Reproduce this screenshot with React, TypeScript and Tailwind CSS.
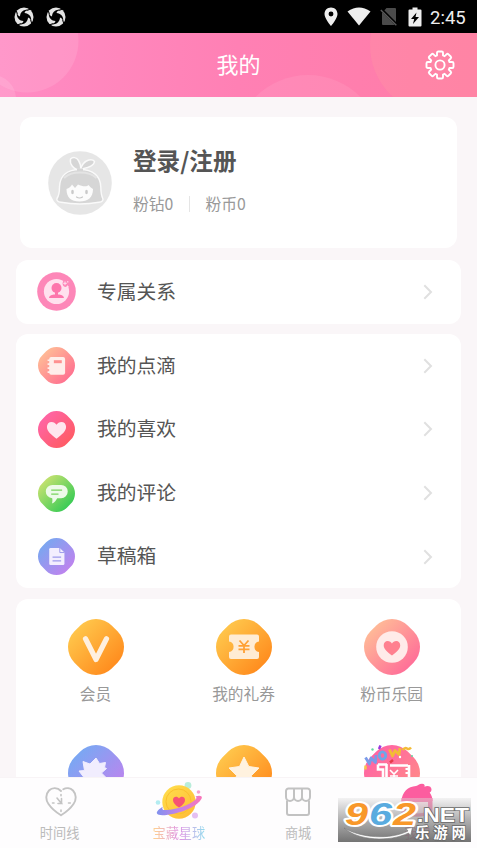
import React from 'react';

interface BlobProps {
  id: string;
  from: string;
  to: string;
  size?: 'sm' | 'lg';
  children?: React.ReactNode;
}

// Rounded diamond badge, everything inside is drawn on a 56x56 grid
function Blob({ id, from, to, size = 'lg', children }: BlobProps) {
  return (
    <svg viewBox="0 0 56 56" className={size === 'lg' ? 'w-14 h-14 shrink-0' : 'w-[37px] h-[37px] shrink-0'}>
      <defs>
        <linearGradient id={id} x1="0.15" y1="0.15" x2="0.85" y2="0.85">
          <stop offset="0" stopColor={from} />
          <stop offset="1" stopColor={to} />
        </linearGradient>
        <clipPath id={`${id}-clip`}>
          <rect x="1.700" y="1.700" width="52.600" height="52.600" rx="22.200" transform="rotate(45 28 28)" />
        </clipPath>
      </defs>
      <rect width="56" height="56" fill={`url(#${id})`} clipPath={`url(#${id}-clip)`} />
      {children}
    </svg>
  );
}

function RelationIcon() {
  return (
    <svg viewBox="0 0 39 39" className="w-[39px] h-[39px] -ml-px -mr-px shrink-0">
      <circle cx="19.5" cy="19.5" r="19.3" fill="#fd87b8" />
      <circle cx="19.5" cy="19.5" r="12.6" fill="#ffe1ee" />
      <circle cx="19.5" cy="16" r="5" fill="#fd76ac" />
      <path d="M18 19h3v3.500c3 .2 5.500 .8 6 3.500H12c.5-2.700 3-3.300 6-3.500z" fill="#fd76ac" />
      <circle cx="29" cy="11.500" r="3.400" fill="#fd87b8" />
      <path d="M28 9.500v3.600M26.200 11.300h3.600M30.500 13.500v2M29.500 14.500h2M30.800 9v1.600" stroke="#ffe1ee" strokeWidth="1" />
    </svg>
  );
}

function Avatar() {
  return (
    <svg viewBox="0 0 64 64" className="w-16 h-16 shrink-0">
      <circle cx="32" cy="32" r="31.800" fill="#e6e6e6" />
      <g fill="#d6d6d6" stroke="#fafafa" strokeWidth="1.400" strokeLinejoin="round">
        <path d="M32 18.500C37 17 46 16 46.500 10.500c-1.500-2-5-2-8-.5s-5 5-6.500 9z" />
        <path d="M33 19.500C25 18.500 21.500 13 22.500 8c2.500-2.500 6-1.500 8 1.500s2.500 7 2.500 10z" />
        <path d="M32 18.500c13 0 20.500 6.500 20.800 17.500.1 5 .2 8 2 11.500.8 2-.8 3.300-3.800 3.800-12 2.200-26 2.200-38 0-3-.5-4.800-1.800-4-3.800 2-3 2.500-6 2.500-11.500C11.800 25 19 18.500 32 18.500z" />
      </g>
      <path d="M29 17.500h6v2.500h-6z" fill="#d6d6d6" />
      <path d="M16 27c4-4 9.500-5.500 16-5.500s12.500 1.500 16.500 5.500" fill="none" stroke="#e4e4e4" strokeWidth="2" />
      <path d="M18.500 38c2.500-1 4.500-2.500 5.500-4.500l3 3.500 3-3.500c4 2 9 2.500 10.500.5 1.500 2 3 3 4.500 4 0 8.500-5 12.500-13.500 12.500S18.500 46.500 18.500 38z" fill="#fcfcfc" />
      <ellipse cx="24.500" cy="41" rx="1.300" ry="2.300" fill="#cacaca" />
      <ellipse cx="38.500" cy="41" rx="1.300" ry="2.300" fill="#cacaca" />
      <path d="M28.500 46q3 2 6 0" fill="none" stroke="#c6c6c6" strokeWidth="1.200" strokeLinecap="round" />
    </svg>
  );
}

function Chevron() {
  return (
    <svg viewBox="0 0 10 16" className="w-[10px] h-4 shrink-0" fill="none" stroke="#e0e0e0" strokeWidth="2">
      <path d="M1.300 1.300 8 8l-6.700 6.700" />
    </svg>
  );
}

function Swirl() {
  return (
    <svg viewBox="0 0 20 20" className="w-5 h-5">
      <circle cx="10" cy="10" r="9.500" fill="#e4e4e4" />
      <path d="M10 5.800 14.200 10 10 14.200 5.800 10z" fill="#000" />
      {[0, 90, 180, 270].map((angle) => (
        <path key={angle} d="M6 10.500C5.800 7.500 7 5 9.500 3.600c1.600-.8 3-1 4-.5-1.700.3-2.700 1.400-3.200 4z" fill="#000" transform={`rotate(${angle} 10 10)`} />
      ))}
      {[0, 90, 180, 270].map((angle) => (
        <path key={angle} d="M12.500 3.400Q15 3 16.500 1.800" fill="none" stroke="#000" strokeWidth="1.100" transform={`rotate(${angle} 10 10)`} />
      ))}
    </svg>
  );
}

function StatusBar() {
  return (
    <div className="h-[33px] shrink-0 bg-black flex items-center justify-between pl-[14px] pr-[10px]">
      <div className="flex gap-3">
        <Swirl />
        <Swirl />
      </div>
      <div className="flex items-center">
        <svg viewBox="0 0 14 20" className="w-[14px] h-[20px]" fill="#eee">
          <path fillRule="evenodd" d="M7 .5C3.200.5.500 3.300.500 7 .5 11.500 7 19 7 19s6.500-7.500 6.500-12C13.500 3.300 10.800.5 7 .5zM7 4.500a2.400 2.400 0 1 1 0 4.900 2.400 2.400 0 0 1 0-4.900z" />
        </svg>
        <svg viewBox="0 0 24 19" className="w-6 h-[19px] ml-[9px]" fill="#eee">
          <path d="M.5 4.500Q12-3.500 23.500 4.500L12 18.500z" />
        </svg>
        <svg viewBox="0 0 18 19" className="w-[18px] h-[19px] ml-[9px]">
          <path d="M6.500 1H15a1 1 0 0 1 1 1v15a1 1 0 0 1-1 1H3a1 1 0 0 1-1-1V6z" fill="#4b4b4b" />
          <path d="M1 2l16 16" stroke="#000" strokeWidth="3" />
          <path d="M.8 3l15.500 15.300" stroke="#5a5a5a" strokeWidth="1.400" />
        </svg>
        <svg viewBox="0 0 14 20" className="w-[14px] h-5 ml-[10px]">
          <path d="M1.500 2.500H4.500V.5h5v2h3a1 1 0 0 1 1 1V18.500a1 1 0 0 1-1 1h-11a1 1 0 0 1-1-1V3.500a1 1 0 0 1 1-1z" fill="#eee" />
          <path d="M8.500 5.500 3 12h3.200l-1.200 5 6-7H7.500z" fill="#000" />
        </svg>
        <span className="ml-2 w-[37px] font-['Roboto',sans-serif] text-[18.500px] leading-5 text-[#eee] mt-0.5 whitespace-nowrap">2:45</span>
      </div>
    </div>
  );
}

function Header() {
  return (
    <header className="relative h-16 shrink-0 overflow-hidden bg-linear-to-r from-[#ff8cc4] via-[#ff80b4] to-[#ff7ca6] flex items-center justify-center">
      <svg viewBox="0 0 477 64" className="absolute inset-0 w-full h-full">
        <circle cx="27" cy="8" r="51.500" fill="#fff" fillOpacity="0.11" />
        <circle cx="-8" cy="66" r="24" fill="#fff" fillOpacity="0.12" />
        <circle cx="308" cy="116" r="74" fill="#fff" fillOpacity="0.08" />
        <circle cx="440" cy="12" r="70" fill="#ff96a2" fillOpacity="0.35" />
      </svg>
      <h1 className="relative text-[22px] leading-8 text-white -mt-1">我的</h1>
      <svg viewBox="0 0 30 30" className="absolute right-[22px] top-[17px] w-[30px] h-[30px]" fill="none" stroke="#fff" strokeWidth="1.900" strokeLinejoin="round">
        <path d="M12 5.500V2.800Q12 1.500 13.300 1.500h3.400Q18 1.500 18 2.800v2.700l1.600.7 1.900-1.900q1-1 2 0l2.200 2.200q1 1 0 2l-1.900 1.900.7 1.600h2.700q1.300 0 1.300 1.300v3.400q0 1.300-1.300 1.300h-2.700l-.7 1.600 1.900 1.900q1 1 0 2l-2.200 2.200q-1 1-2 0l-1.900-1.900-1.600.7v2.700q0 1.300-1.300 1.300h-3.400q-1.300 0-1.300-1.300v-2.700l-1.600-.7-1.900 1.900q-1 1-2 0l-2.200-2.200q-1-1 0-2l1.900-1.900-.7-1.600H2.800q-1.300 0-1.300-1.300v-3.400Q1.500 12 2.800 12h2.700l.7-1.600-1.900-1.900q-1-1 0-2l2.200-2.200q1-1 2 0l1.900 1.900z" />
        <circle cx="15" cy="15" r="4.600" />
      </svg>
    </header>
  );
}

interface RowProps {
  icon: React.ReactNode;
  label: string;
}

function Row({ icon, label }: RowProps) {
  return (
    <div className="h-[63.600px] flex items-center pl-[21.500px] pr-7">
      {icon}
      <span className="ml-[22.500px] flex-1 text-[19.800px] leading-7 text-[#555] -mt-[2.500px]">{label}</span>
      <Chevron />
    </div>
  );
}

const HEART = 'M28 42C20 36 13.500 31 13.500 24c0-4.500 3-7.500 7-7.500 3.200 0 6 1.800 7.500 4.300 1.500-2.500 4.300-4.300 7.500-4.300 4 0 7 3 7 7.500C42.500 31 36 36 28 42z';

const rows: RowProps[] = [
  {
    label: '我的点滴',
    icon: (
      <Blob id="note" from="#ffbb96" to="#ff7190" size="sm">
        <path d="M20 15h18a3 3 0 0 1 3 3v21a3 3 0 0 1-3 3H20a3 3 0 0 1-3-3V18a3 3 0 0 1 3-3z" fill="#ffeeea" />
        <path d="M14.500 20h5M14.500 26h5M14.500 32h5M14.500 38h5" stroke="#ffeeea" strokeWidth="2.500" />
        <rect x="24" y="20" width="12" height="4.500" fill="#ff9190" />
      </Blob>
    ),
  },
  {
    label: '我的喜欢',
    icon: (
      <Blob id="like" from="#ff65a5" to="#ff5b64" size="sm">
        <path d={HEART} fill="#ffe6ee" />
      </Blob>
    ),
  },
  {
    label: '我的评论',
    icon: (
      <Blob id="comment" from="#c4e170" to="#38cb55" size="sm">
        <path d="M22 15h13a9 9 0 0 1 0 20h-6c-2 4-4 6.500-8 8 1-3 1-5 .5-8A10 10 0 0 1 22 15z" fill="#edfae9" />
        <path d="M20 23h16.500M20 29h11" stroke="#78d35c" strokeWidth="2" />
      </Blob>
    ),
  },
  {
    label: '草稿箱',
    icon: (
      <Blob id="draft" from="#7aa7f0" to="#be83ee" size="sm">
        <path d="M19 15h14l7 7v17a2 2 0 0 1-2 2H19a2 2 0 0 1-2-2V17a2 2 0 0 1 2-2z" fill="#f3eefe" />
        <path d="M33 15v7h7" fill="none" stroke="#9e9bec" strokeWidth="1.500" />
        <path d="M22 29h13M22 34.500h13" stroke="#9e9bec" strokeWidth="2" />
      </Blob>
    ),
  },
];

const tiles: { id: string; label?: string; icon: React.ReactNode }[] = [
  {
    id: 'vip',
    label: '会员',
    icon: (
      <Blob id="vip" from="#ffc64b" to="#ff8c1e">
        <path d="M17.500 19.800 28 40.500 38.500 19.800" fill="none" stroke="#fff0df" strokeWidth="5.200" strokeLinecap="round" strokeLinejoin="round" />
      </Blob>
    ),
  },
  {
    id: 'coupon',
    label: '我的礼券',
    icon: (
      <Blob id="coupon" from="#ffc64b" to="#ff8c1e">
        <path d="M15 15.500h26a2 2 0 0 1 2 2v5a5.300 5.300 0 0 0 0 10.500v5a2 2 0 0 1-2 2H15a2 2 0 0 1-2-2v-5a5.300 5.300 0 0 0 0-10.500v-5a2 2 0 0 1 2-2z" fill="#ffecd4" />
        <path d="M23.500 21.500l4.500 5 4.500-5M22.500 26.800h11M22.500 30.300h11M28 26.500V34" fill="none" stroke="#ffa034" strokeWidth="1.800" />
      </Blob>
    ),
  },
  {
    id: 'park',
    label: '粉币乐园',
    icon: (
      <Blob id="park" from="#ffba97" to="#ff6e98">
        <circle cx="28" cy="28" r="15.800" fill="#ffebe9" />
        <path d={HEART} fill="#ff808f" transform="translate(12 12.600) scale(0.57)" />
      </Blob>
    ),
  },
  {
    id: 'level',
    icon: (
      <Blob id="level" from="#79a8f3" to="#be83ee">
        <path d="M28 13l3.500 5.500 6-1-1 5 2 1-5 4.500 4 4-3 10H18l-7-4 5-5.500-5-6.500 5.500-.5-1.500-9 7 2.500z" fill="#f1edfe" stroke="#f1edfe" strokeLinejoin="round" />
      </Blob>
    ),
  },
  {
    id: 'star',
    icon: (
      <Blob id="star" from="#ffc64b" to="#ff8c1e">
        <path d="m28 12 4.800 9.500L43 23l-7.500 7.500 2 11L28 36l-9.500 5.500 2-11L13 23l10.500-1.500z" fill="#fff2df" stroke="#fff2df" strokeLinejoin="round" />
      </Blob>
    ),
  },
  {
    id: 'wow',
    icon: (
      <Blob id="wow" from="#ff64a4" to="#ff8b87">
        <path d="M14 19.500h9M14 19.500v5h5V32M22.500 19v13M26 20.500h18M45 20v12" fill="none" stroke="#fff" strokeWidth="2.600" />
        <path d="M41.500 24h4M41.500 28h4" stroke="#fff" strokeWidth="2" />
        <path d="M26 25l4 4 4-4M26 31h8M30 28v4" fill="none" stroke="#fff" strokeWidth="1.600" />
        <g fill="none" strokeWidth="2.800" strokeLinejoin="round">
          <path d="M1.500 12.500l4 6.500 1.500-6 4.500 4.500.5-7.500" stroke="#799be9" />
          <ellipse cx="18.500" cy="10.500" rx="3.200" ry="3.600" stroke="#6fa7e8" />
          <path d="M25.500 4.500l3 6.500 2.500-5.500 4 4 1-6.500" stroke="#f3bc36" />
        </g>
        <path d="M38.500 5q2.500-3 4.500-1.500t4-1" fill="none" stroke="#f3bc36" strokeWidth="2.500" />
        <path d="M15 4 16.500.5" stroke="#9937df" strokeWidth="2.500" />
        <path d="M26 17.500l3-2.500" stroke="#e63b49" strokeWidth="2.500" />
        <path d="M1.500 20.500v4" stroke="#f5c94b" strokeWidth="2.500" />
        <circle cx="8.500" cy="4.500" r="1.200" fill="#65d8a6" />
        <circle cx="48" cy="11" r="1" fill="#65d8a6" />
        <circle cx="36" cy="12" r="1.200" fill="#fff" />
      </Blob>
    ),
  },
];

function TimelineIcon() {
  return (
    <svg viewBox="0 0 32 30" className="w-8 h-[30px]" fill="none" stroke="#c4c4c4" strokeWidth="1.900" strokeLinecap="round">
      <path d="M16 4C12.500.2 7 .3 4 3.500.5 7.300.500 12.800 3.500 17c3 4.500 8 8.500 12.500 11.300C20.500 25.500 25.500 21.500 28.500 17c3-4.200 3-9.700-.5-13.500-2.700-2.700-6.700-3-9.700-1.200" />
      <path d="M16 7.500v1.200M16 23v1.500M7.500 16H9M23.500 16h1.800M12 11l4.500 5.500h-3.500M16.500 16.500V11.500" strokeWidth="1.600" />
    </svg>
  );
}

function PlanetIcon() {
  return (
    <svg viewBox="0 0 50 40" className="w-[50px] h-10">
      <defs>
        <linearGradient id="planet" x1="0" y1="0" x2="1" y2="1">
          <stop offset="0" stopColor="#ffe04d" />
          <stop offset="1" stopColor="#ffb935" />
        </linearGradient>
        <linearGradient id="ring" x1="0" y1="0" x2="1" y2="0">
          <stop offset="0" stopColor="#8191ee" />
          <stop offset="0.5" stopColor="#c582e8" />
          <stop offset="1" stopColor="#fb75b8" />
        </linearGradient>
      </defs>
      <circle cx="34" cy="5.500" r="3.400" fill="#b9edda" />
      <circle cx="44.500" cy="12" r="1.800" fill="#f6a1cf" />
      <circle cx="4" cy="22.500" r="2.300" fill="#b3ecf1" />
      <circle cx="41" cy="35.500" r="3" fill="#e4bff2" />
      <circle cx="25" cy="22" r="16.700" fill="url(#planet)" />
      <circle cx="24.500" cy="21.500" r="12.500" fill="none" stroke="#fbbf2c" strokeWidth="1" />
      <path d="M25 27.500c-4-2.500-6-4.800-6-7.500 0-4 4.500-4.300 6-1.500 1.500-2.800 6-2.500 6 1.500 0 2.700-2 5-6 7.500z" fill="#f75373" />
      <path d="M41.500 16.200C46 15 49 15.800 47.500 18.800 44 25.500 32 31 20 33.800 11.500 35.600 4 36 3 33.600c-.8-2 2-4.600 6-7.100-1.500 2.500-.6 3.800 3 3.600C22 29.500 36 25 41 20c1.700-1.600 1.900-2.900.5-3.800z" fill="url(#ring)" />
    </svg>
  );
}

function ShopIcon() {
  return (
    <svg viewBox="0 0 28 30" className="w-7 h-[30px]" fill="none" stroke="#c2c2c2" strokeWidth="2" strokeLinejoin="round">
      <path d="M4.500 1.500h19a2.500 2.500 0 0 1 2.500 2.500v6a3.800 3.800 0 0 1-8 0 4 4 0 0 1-8 0 3.800 3.800 0 0 1-8 0V4a2.500 2.500 0 0 1 2.500-2.500zM10 1.500V10M18 1.500V10" />
      <path d="M3 13.500V26a2 2 0 0 0 2 2h18a2 2 0 0 0 2-2V13.500" />
    </svg>
  );
}

function MineIcon() {
  return (
    <svg viewBox="0 0 34 36" className="w-[34px] h-9">
      <path d="M1.500 18C2 9 8 3.500 16 3 18 2.500 19 1 22 .8c2.500 0 3 1.500 2.500 3 3-1.500 7-.5 7 2.700 0 1.500-.8 2.500-1.800 3 1.800 2.500 2.800 5 2.800 8.500z" fill="#fc5d9f" />
      <path d="M1.500 15h31v15c-8 5-23 5-31 0z" fill="#f986b3" />
      <path d="M6 19h22v9q-11 5-22 0z" fill="#ffe3ec" />
    </svg>
  );
}

function TabBar() {
  return (
    <nav className="h-[71px] shrink-0 grid grid-cols-4 bg-[#fefdfe] text-[13.200px] leading-4 text-[#bbb] border-t border-[#f8f4f6]">
      <div className="flex flex-col items-center justify-between pt-[9px] pb-[7px] pl-[2px]">
        <TimelineIcon />
        <span className="-ml-[2px]">时间线</span>
      </div>
      <div className="flex flex-col items-center justify-between pt-[2px] pb-[7px]">
        <PlanetIcon />
        <span className="bg-linear-to-r from-[#ffd28a] via-[#df92e4] to-[#8fdcee] bg-clip-text text-transparent">
          宝藏星球
        </span>
      </div>
      <div className="flex flex-col items-center justify-between pt-[9px] pb-[7px]">
        <ShopIcon />
        <span>商城</span>
      </div>
      <div className="flex flex-col items-center justify-between pt-[5px] pb-[7px]">
        <MineIcon />
        <span className="text-[#fc5d9f]">我的</span>
      </div>
    </nav>
  );
}

function SiteBadge() {
  return (
    <div className="absolute left-[338px] top-[798px] w-[133px] h-[44px] bg-linear-to-b from-[#c8c8c8]/20 via-[#969696]/75 to-[#6c6c6c]/95">
      <svg viewBox="0 0 133 44" className="w-full h-full overflow-visible">
        <path d="M6 30c17 10 46 12 64 3l-2-2.500 6.500-1-2 8-2-2.500C51 44.500 20 42.500 6 30z" fill="#fff" stroke="#777" strokeWidth="0.600" />
        <g fontFamily="'Liberation Sans', sans-serif" fontSize="32" fontWeight="700" fontStyle="italic" stroke="#fff" strokeWidth="4" paintOrder="stroke" strokeLinejoin="round">
          <text x="7" y="27" fill="#f8982a" textLength="23" lengthAdjust="spacingAndGlyphs">9</text>
          <text x="31" y="27" fill="#59abdf" textLength="23" lengthAdjust="spacingAndGlyphs">6</text>
          <text x="55" y="27" fill="#f8982a" textLength="23" lengthAdjust="spacingAndGlyphs">2</text>
        </g>
        <g fill="#fff" stroke="#686868" strokeWidth="1.500" paintOrder="stroke" fontWeight="700">
          <text x="79" y="24" fontFamily="'Liberation Sans', sans-serif" fontSize="19.500" textLength="52" lengthAdjust="spacingAndGlyphs">.NET</text>
          <text x="77" y="40" fontFamily="'Noto Sans CJK SC', sans-serif" fontSize="14.500" textLength="51" lengthAdjust="spacing">乐游网</text>
        </g>
      </svg>
    </div>
  );
}

export default function App() {
  return (
    <div className="relative w-[477px] h-[848px] overflow-hidden flex flex-col bg-[#faf6f8] font-['Noto_Sans_CJK_SC',sans-serif]">
      <StatusBar />
      <Header />
      <main className="flex-1 min-h-0 overflow-hidden px-4 pt-5">
        <section className="mx-1 h-[131px] bg-white rounded-xl flex items-center pl-[27.500px]">
          <Avatar />
          <div className="ml-[21.500px] -mt-[7px]">
            <h2 className="text-[23.600px] leading-8 font-bold text-[#555]">登录/注册</h2>
            <div className="mt-[18px] flex items-center text-[15.800px] leading-5 text-[#999]">
              <span>粉钻0</span>
              <span className="mx-[15.500px] w-px h-4 bg-[#e5e5e5]" />
              <span>粉币0</span>
            </div>
          </div>
        </section>

        <section className="mt-3 bg-white rounded-xl">
          <Row icon={<RelationIcon />} label="专属关系" />
        </section>

        <section className="mt-[10.500px] bg-white rounded-xl">
          {rows.map((row) => (
            <Row key={row.label} {...row} />
          ))}
        </section>

        <section className="mt-[11px] h-[260px] bg-white rounded-xl grid grid-cols-[148px_148px_148px] auto-rows-[126px] pt-5 pl-[5.500px]">
          {tiles.map((tile) => (
            <div key={tile.id} className="flex flex-col items-center">
              {tile.icon}
              {tile.label && <span className="mt-[9px] text-[15.700px] leading-5 text-[#999]">{tile.label}</span>}
            </div>
          ))}
        </section>
      </main>
      <TabBar />
      <SiteBadge />
    </div>
  );
}
